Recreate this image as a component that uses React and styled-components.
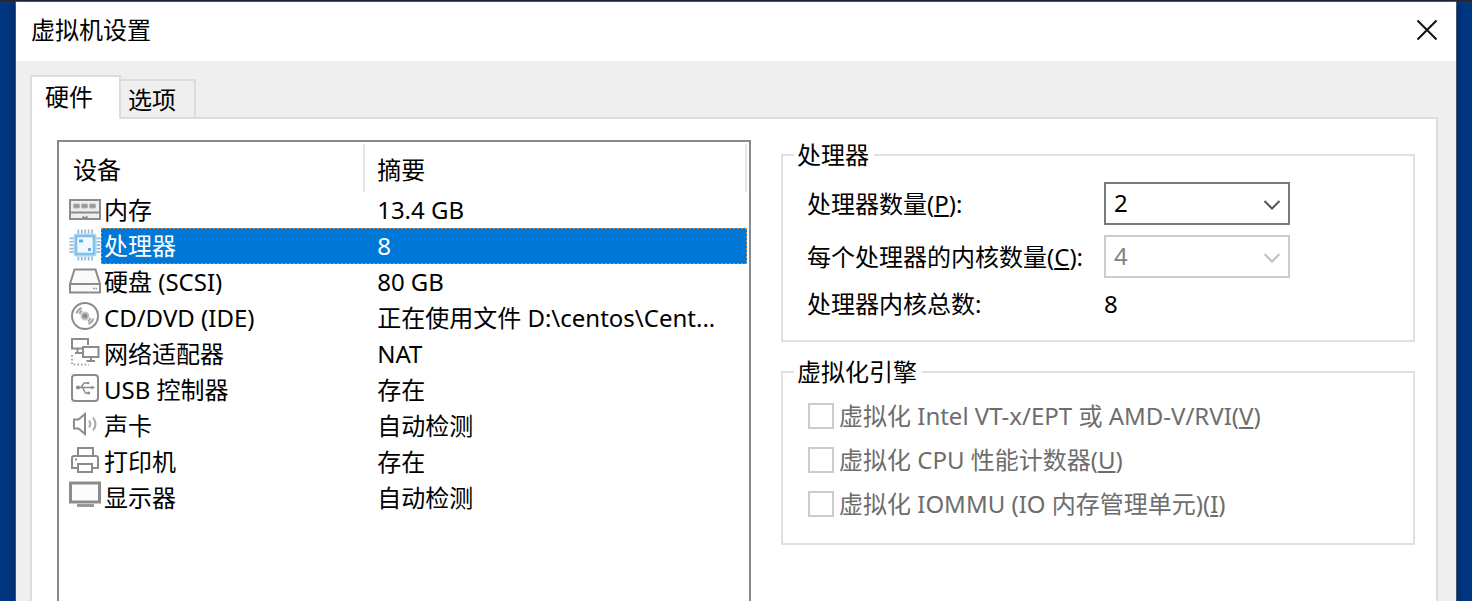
import React, { useState } from "react";
import styled, { createGlobalStyle, css } from "styled-components";

const GlobalStyle = createGlobalStyle`
  * {
    box-sizing: border-box;
  }
  body {
    margin: 0;
    background: #003580;
    color: #000;
    font-family: "Noto Sans", "Noto Sans CJK SC", sans-serif;
    font-size: 24px;
    line-height: 32px;
  }
  button, select, input {
    font: inherit;
    color: inherit;
  }
`;

/* icons */

const MemoryIcon = () => (
  <DeviceIcon viewBox="0 0 32 36">
    <rect x="1" y="8" width="30" height="19" fill="#eee" />
    <path d="M1 20.500H31" />
    <path d="M13.500 24.500L16 26.500L18.500 24.500" />
    <g fill="#999" stroke="#b5b5b5" strokeWidth="1">
      <rect x="4.500" y="12" width="6" height="4" rx="1" />
      <rect x="12.500" y="12" width="6" height="4" rx="1" />
      <rect x="20.500" y="12" width="6" height="4" rx="1" />
    </g>
  </DeviceIcon>
);

const CpuIcon = () => (
  <DeviceIcon viewBox="0 0 32 36">
    <path
      stroke="#8fb9da"
      strokeDasharray="1.700 1.700"
      strokeWidth="4"
      d="M8.500 3.500H24.500M8.500 30.500H24.500M2.500 9.500V25.500M29.500 9.500V25.500"
    />
    <rect x="6.500" y="7.500" width="19" height="19" rx="1" fill="#f2f9fe" stroke="#a9d6f8" strokeWidth="4" />
    <rect x="7" y="8" width="18" height="18" stroke="#5da9e0" strokeWidth="1" />
    <path fill="#5da9e0" stroke="none" d="M10 11.500h4v3h-4zM19 20h3v3h-3z" />
  </DeviceIcon>
);

const DiskIcon = () => (
  <DeviceIcon viewBox="0 0 32 36">
    <path fill="#fafafa" d="M5.500 5.500H26.500L31 20V28.500H1V20Z" />
    <path d="M1 20H31" />
    <path strokeWidth="1.500" d="M24 24.500H28" strokeDasharray="1.500 1" />
  </DeviceIcon>
);

const DiscIcon = () => (
  <DeviceIcon viewBox="0 0 32 36">
    <circle cx="16" cy="16" r="13" />
    <circle cx="16" cy="16" r="3.500" fill="#8c8c8c" stroke="#c4c4c4" />
    <path stroke="#a4a4a4" d="M7.500 13.500A9 9 0 0 1 12.500 8M10.500 14A6 6 0 0 1 13 10.500" />
    <path stroke="#a4a4a4" d="M24.500 18.500A9 9 0 0 1 19.500 24M21.500 18A6 6 0 0 1 19 21.500" />
  </DeviceIcon>
);

const NetworkIcon = () => (
  <DeviceIcon viewBox="0 0 32 36">
    <path d="M13 12.500H3V3H19V9" />
    <path d="M8.500 12.500V16M6 17H13" />
    <rect x="14" y="11" width="15.500" height="10" />
    <path d="M22 21V25M17.500 25H26" />
    <path d="M3 19V28.500H20" strokeDasharray="1.700 2" stroke="#aaa" />
  </DeviceIcon>
);

const UsbIcon = () => (
  <DeviceIcon viewBox="0 0 32 36">
    <rect x="3" y="3" width="26" height="26" rx="3" />
    <path strokeWidth="1.500" d="M9 15.500H24M12 15.500L15 11H19M13.500 15.500L16.500 21H19" />
    <g fill="#8c8c8c" stroke="none">
      <circle cx="9" cy="15.500" r="2" />
      <path d="M22.500 13.500l3.500 2-3.500 2z" />
      <circle cx="19" cy="11" r="1.300" />
      <path d="M18.500 19.700h2.600v2.600h-2.600z" />
    </g>
  </DeviceIcon>
);

const SoundIcon = () => (
  <DeviceIcon viewBox="0 0 32 36">
    <path d="M5 11.500H9.500L16 6V26L9.500 20.500H5Z" />
    <path stroke="#aaa" d="M20 12.500Q22.500 16 20 19.500M24 9.500Q29 16 24 22.500" />
  </DeviceIcon>
);

const PrinterIcon = () => (
  <DeviceIcon viewBox="0 0 32 36">
    <path d="M9 12V4H24V12" />
    <path d="M9 24H3V14Q3 12 5 12H27Q29 12 29 14V24H23" />
    <rect x="9" y="20" width="14" height="8" />
    <path d="M6 15.500H8" />
  </DeviceIcon>
);

const DisplayIcon = () => (
  <DeviceIcon viewBox="0 0 32 36">
    <rect x="1.500" y="3" width="29" height="19" fill="#fbfcfe" strokeWidth="3" />
    <path d="M8 25.500H25" strokeWidth="3" stroke="#999" />
  </DeviceIcon>
);

const devices = [
  { name: "内存", summary: "13.4 GB", Icon: MemoryIcon },
  { name: "处理器", summary: "8", Icon: CpuIcon },
  { name: "硬盘 (SCSI)", summary: "80 GB", Icon: DiskIcon },
  { name: "CD/DVD (IDE)", summary: "正在使用文件 D:\\centos\\Cent...", Icon: DiscIcon },
  { name: "网络适配器", summary: "NAT", Icon: NetworkIcon },
  { name: "USB 控制器", summary: "存在", Icon: UsbIcon },
  { name: "声卡", summary: "自动检测", Icon: SoundIcon },
  { name: "打印机", summary: "存在", Icon: PrinterIcon },
  { name: "显示器", summary: "自动检测", Icon: DisplayIcon },
];

const engineOptions = [
  { id: "vtx", text: "虚拟化 Intel VT-x/EPT 或 AMD-V/RVI", hotkey: "V" },
  { id: "counters", text: "虚拟化 CPU 性能计数器", hotkey: "U" },
  { id: "iommu", text: "虚拟化 IOMMU (IO 内存管理单元)", hotkey: "I" },
];

const Combo = ({ id, value, options, disabled, onChange }) => (
  <ComboWrapper $disabled={disabled}>
    <select id={id} value={value} disabled={disabled} onChange={onChange}>
      {options.map((o) => (
        <option key={o}>{o}</option>
      ))}
    </select>
    <svg width="18" height="12" viewBox="0 0 18 12" aria-hidden="true">
      <path d="M1.500 2L9 9.500L16.500 2" fill="none" stroke="currentColor" strokeWidth="2" />
    </svg>
  </ComboWrapper>
);

const App = () => {
  const [selected, setSelected] = useState("处理器");
  const [count, setCount] = useState("2");

  return (
    <Desktop>
      <GlobalStyle />
      <Dialog>
        <TitleBar>
          <h1>虚拟机设置</h1>
          <CloseButton type="button" aria-label="关闭">
            <svg width="22" height="22" viewBox="0 0 22 22" aria-hidden="true">
              <path d="M1.500 1.500L20.500 20.500M20.500 1.500L1.500 20.500" stroke="#111" strokeWidth="2" />
            </svg>
          </CloseButton>
        </TitleBar>
        <Body>
          <Tabs role="tablist">
            <Tab type="button" role="tab" aria-selected="true" $active>
              硬件
            </Tab>
            <Tab type="button" role="tab" aria-selected="false">
              选项
            </Tab>
          </Tabs>
          <Panel>
            <DeviceList>
              <DeviceTable>
                <thead>
                  <tr>
                    <HeaderCell $wide>
                      <span>设备</span>
                    </HeaderCell>
                    <HeaderCell>
                      <span>摘要</span>
                    </HeaderCell>
                  </tr>
                </thead>
                <tbody>
                  {devices.map(({ name, summary, Icon }) => (
                    <tr key={name} onClick={() => setSelected(name)}>
                      <td>
                        <Device>
                          <Icon />
                          <DeviceName $selected={selected === name}>{name}</DeviceName>
                        </Device>
                      </td>
                      <td>
                        <Summary $selected={selected === name}>{summary}</Summary>
                      </td>
                    </tr>
                  ))}
                </tbody>
              </DeviceTable>
            </DeviceList>
            <Settings>
              <Group>
                <legend>处理器</legend>
                <FieldGrid>
                  <label htmlFor="processors">
                    处理器数量(<u>P</u>):
                  </label>
                  <Combo
                    id="processors"
                    value={count}
                    options={["1", "2", "4", "8"]}
                    onChange={(e) => setCount(e.target.value)}
                  />
                  <label htmlFor="cores">
                    每个处理器的内核数量(<u>C</u>):
                  </label>
                  <Combo id="cores" value="4" options={["4"]} disabled />
                  <span>处理器内核总数:</span>
                  <output htmlFor="processors cores">{count * 4}</output>
                </FieldGrid>
              </Group>
              <Group>
                <legend>虚拟化引擎</legend>
                <CheckList>
                  {engineOptions.map(({ id, text, hotkey }) => (
                    <CheckRow key={id} htmlFor={id}>
                      <Checkbox type="checkbox" id={id} disabled />
                      <span>
                        {text}(<u>{hotkey}</u>)
                      </span>
                    </CheckRow>
                  ))}
                </CheckList>
              </Group>
            </Settings>
          </Panel>
        </Body>
      </Dialog>
    </Desktop>
  );
};

const Desktop = styled.div`
  display: flex;
  min-height: 100vh;
  padding: 2px 16px 0;
  background: linear-gradient(#1d2b3d 2px, #17365c 2px, #17365c 4px, #003580 4px);
`;

const Dialog = styled.div`
  flex: 1;
  display: flex;
  flex-direction: column;
  background: #efefef;
  box-shadow: 0 0 0 1px #44546c, 0 0 8px rgba(0, 0, 0, 0.4);
`;

const TitleBar = styled.header`
  display: flex;
  align-items: center;
  justify-content: space-between;
  height: 59px;
  padding: 0 18px 4px 15px;
  background: #fff;

  h1 {
    margin: 0;
    font-size: 24px;
    font-weight: 400;
  }
`;

const CloseButton = styled.button`
  display: flex;
  padding: 0;
  border: none;
  background: none;
`;

const Body = styled.main`
  flex: 1;
  display: flex;
  flex-direction: column;
  padding: 14px 18px 0 14px;
`;

const Tabs = styled.div`
  display: flex;
  align-items: flex-end;
`;

const Tab = styled.button`
  height: 38px;
  padding: 2px 18px 0 7px;
  border: 2px solid #dcdcdc;
  border-width: 2px 2px 0 0;
  background: #efefef;

  ${({ $active }) =>
    $active &&
    css`
      position: relative;
      height: 44px;
      margin-bottom: -2px;
      padding: 0 26px 2px 13px;
      border-width: 2px 2px 0 2px;
      background: #fff;
    `}
`;

const Panel = styled.section`
  flex: 1;
  display: grid;
  grid-template-columns: 694fr 634fr;
  gap: 30px;
  padding: 21px 21px 0 25px;
  border: 2px solid #dcdcdc;
  border-bottom: none;
  background: #fff;
`;

const DeviceList = styled.div`
  padding-right: 2px;
  border: 2px solid #868a93;
  border-bottom: none;
`;

const DeviceTable = styled.table`
  width: 100%;
  table-layout: fixed;
  border-collapse: collapse;

  td {
    padding: 0;
  }
`;

const HeaderCell = styled.th`
  width: ${({ $wide }) => ($wide ? "44.5%" : "auto")};
  padding: 2px 0 0;
  font-weight: 400;
  text-align: left;

  span {
    display: flex;
    align-items: center;
    height: 48px;
    padding: ${({ $wide }) => ($wide ? "4px 0 0 14px" : "4px 0 0 12px")};
    border-right: 2px solid #e5e5e5;
  }
`;

const Device = styled.div`
  display: flex;
  padding-left: 10px;
`;

const DeviceIcon = styled.svg.attrs({ "aria-hidden": true })`
  flex: none;
  width: 32px;
  height: 36px;
  fill: none;
  stroke: #8c8c8c;
  stroke-width: 2px;
`;

const dotsX = "repeating-linear-gradient(90deg, #e08a45 0 2px, #0078d7 2px 4px)";
const dotsY = "repeating-linear-gradient(#e08a45 0 2px, #0078d7 2px 4px)";

/* focus rectangle: dotted along the top, bottom and one outer side */
const selectedCell = css`
  color: #fff;
  background:
    ${dotsX} top / 100% 1px no-repeat,
    ${dotsX} bottom / 100% 1px no-repeat,
    ${dotsY} ${({ $side }) => $side} / 1px 100% no-repeat,
    #0078d7;
`;

const Cell = styled.div`
  height: 36px;
  line-height: 36px;
  overflow: hidden;
  white-space: nowrap;
  text-overflow: ellipsis;
  ${({ $selected }) => $selected && selectedCell}
`;

const DeviceName = styled(Cell).attrs({ $side: "left" })`
  flex: 1;
  padding-left: 3px;
`;

const Summary = styled(Cell).attrs({ $side: "right" })`
  padding-left: 12px;
`;

const Settings = styled.div`
  display: flex;
  flex-direction: column;
  gap: 14px;
  min-width: 0;
  margin-top: -1px;
`;

const Group = styled.fieldset`
  min-width: 0;
  margin: 0;
  padding: 0 12px 0 11px;
  border: 2px solid #e0e0e0;

  legend {
    padding: 0 5px 0 3px;
  }
`;

const FieldGrid = styled.div`
  display: grid;
  grid-template-columns: 297px 186px;
  row-gap: 10px;
  align-items: center;
  padding: 11px 0 20px 13px;
`;

const ComboWrapper = styled.div`
  position: relative;
  color: ${({ $disabled }) => ($disabled ? "#838383" : "#000")};

  select {
    display: block;
    width: 100%;
    height: 43px;
    padding: 0 32px 2px 8px;
    border: 2px solid ${({ $disabled }) => ($disabled ? "#ccc" : "#7a7a7a")};
    border-radius: 0;
    background: #fff;
    opacity: 1;
    appearance: none;
  }
  svg {
    position: absolute;
    top: 17px;
    right: 9px;
    color: ${({ $disabled }) => ($disabled ? "#bfbfbf" : "#555")};
    pointer-events: none;
  }
`;

const CheckList = styled.div`
  padding: 6px 0 17px 14px;
`;

const CheckRow = styled.label`
  display: flex;
  align-items: center;
  gap: 5px;
  height: 44px;
  color: #6d6d6d;
  white-space: nowrap;
`;

const Checkbox = styled.input`
  flex: none;
  width: 26px;
  height: 26px;
  margin: 0;
  border: 2px solid #ccc;
  background: #fff;
  appearance: none;
`;

export default App;
